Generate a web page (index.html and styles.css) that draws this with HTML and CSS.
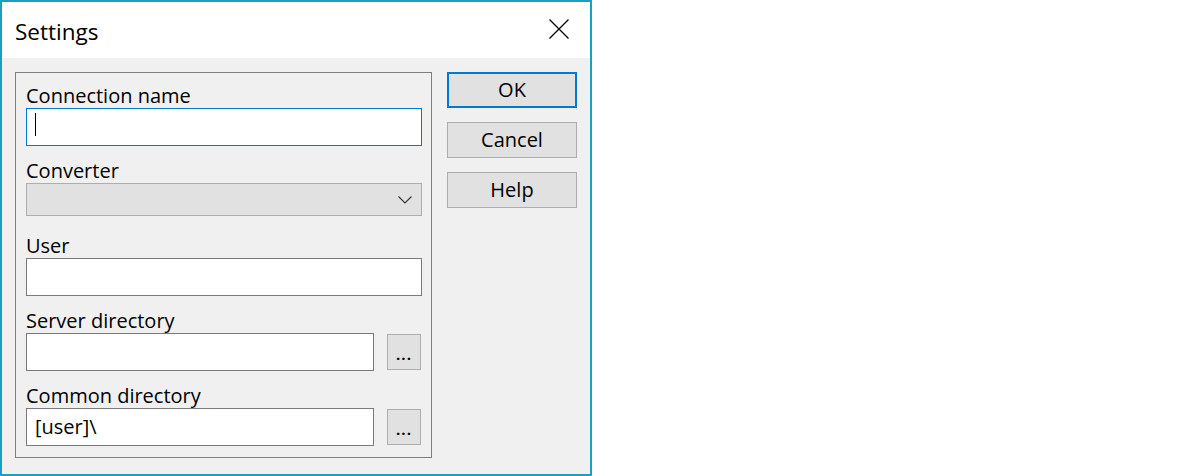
FILE: index.html
```html
<!DOCTYPE html>
<html lang="en">
<head>
  <meta charset="UTF-8" />
  <title>Settings</title>
  <link rel="stylesheet" href="styles.css">
</head>
<body>
  <div class="window">
    <div class="titlebar">
      <span class="title">Settings</span>
      <span class="close">
        <svg width="20" height="20" viewBox="0 0 20 20">
          <path d="M0.5 0.5 L19.5 19.5 M19.5 0.5 L0.5 19.5" stroke="#000" stroke-width="1.3" fill="none" />
        </svg>
      </span>
    </div>

    <div class="client">
      <div class="group">
        <div class="field">
          <div class="label">Connection name</div>
          <div class="input focused"><span class="caret"></span></div>
        </div>

        <div class="field">
          <div class="label">Converter</div>
          <div class="combo">
            <svg width="14" height="8" viewBox="0 0 14 8">
              <path d="M0.5 0.5 L7 7 L13.5 0.5" stroke="#333" stroke-width="1.1" fill="none" />
            </svg>
          </div>
        </div>

        <div class="field">
          <div class="label">User</div>
          <div class="input"></div>
        </div>

        <div class="field">
          <div class="label">Server directory</div>
          <div class="row">
            <div class="input"></div>
            <div class="browse">...</div>
          </div>
        </div>

        <div class="field">
          <div class="label">Common directory</div>
          <div class="row">
            <div class="input">[user]\</div>
            <div class="browse">...</div>
          </div>
        </div>
      </div>

      <div class="buttons">
        <div class="btn default">OK</div>
        <div class="btn">Cancel</div>
        <div class="btn">Help</div>
      </div>
    </div>
  </div>
</body>
</html>
```

FILE: styles.css
```css
html, body {
  margin: 0;
  padding: 0;
  background: white;
  font-family: "Open Sans", "Noto Sans", sans-serif;
  color: black;
}

.window {
  box-sizing: border-box;
  width: 592px;
  height: 476px;
  border: 2px solid #1aa0bf;
  display: flex;
  flex-direction: column;
}

.titlebar {
  height: 56px;
  background: white;
  display: flex;
  align-items: center;
  padding-left: 13px;
  padding-right: 21px;
}

.title {
  font-size: 22.5px;
  flex: 1;
  margin-top: 2px;
}

.close {
  display: flex;
  margin-top: -2px;
}

.client {
  flex: 1;
  background: #f0f0f0;
  display: flex;
  align-items: flex-start;
  padding: 14px 0 0 13px;
  gap: 15px;
}

.group {
  box-sizing: border-box;
  width: 417px;
  height: 386px;
  border: 1px solid #7f7f7f;
  padding: 0 9px 0 10px;
}

.field {
  height: 75px;
  display: flex;
  flex-direction: column;
  justify-content: flex-end;
}

.field:first-child {
  height: 73px;
}

.field:nth-child(2) {
  height: 70px;
  margin-bottom: 5px;
}

.label {
  font-size: 20px;
  line-height: 24px;
  color: #000;
}

.input {
  box-sizing: border-box;
  height: 38px;
  background: white;
  border: 1px solid #7a7a7a;
  font-size: 20px;
  line-height: 36px;
  padding-left: 8px;
  flex: 1;
}

.field > .input {
  flex: none;
}

.input.focused {
  border-color: #0078d7;
  position: relative;
}

.caret {
  position: absolute;
  left: 8px;
  top: 4px;
  width: 1px;
  height: 23px;
  background: black;
}

.combo {
  box-sizing: border-box;
  height: 33px;
  background: #e1e1e1;
  border: 1px solid #adadad;
  display: flex;
  align-items: center;
  justify-content: flex-end;
  padding-right: 9px;
}

.row {
  display: flex;
  align-items: center;
  gap: 13px;
  padding-right: 1px;
}

.browse {
  box-sizing: border-box;
  width: 34px;
  height: 36px;
  background: #e1e1e1;
  border: 1px solid #adadad;
  font-size: 15px;
  font-weight: bold;
  letter-spacing: 1px;
  text-align: center;
  line-height: 38px;
}

.buttons {
  display: flex;
  flex-direction: column;
  gap: 14px;
}

.btn {
  box-sizing: border-box;
  width: 130px;
  height: 36px;
  background: #e1e1e1;
  border: 1px solid #adadad;
  font-size: 20px;
  line-height: 33px;
  text-align: center;
}

.btn.default {
  border: 2px solid #0078d7;
  line-height: 31px;
}
```
